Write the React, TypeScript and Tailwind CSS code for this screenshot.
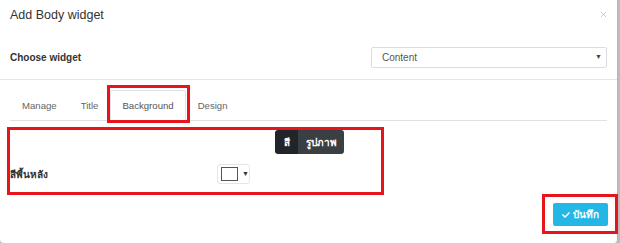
import React from "react";
import { X } from "lucide-react";
import { FaCheck } from "react-icons/fa";

// Tabs of the widget dialog
const tabs = ["Manage", "Title", "Background", "Design"];

const App: React.FC = () => {
  return (
    <div
      className="w-[620px] h-[243px] bg-[#bdbdbd] overflow-hidden"
      style={{ fontFamily: '"Liberation Sans", Arial, sans-serif' }}
    >
      <div className="w-[618px] h-[243px] bg-white border-r border-[#b5b5b5] rounded-b-[4px]">
        {/* Header */}
        <div className="flex justify-between items-start pl-[10px] pr-[9px] pt-[8px]">
          <h4 className="text-[12.5px] leading-[14px] text-[#333]">Add Body widget</h4>
          <X size={9} strokeWidth={2} className="text-[#b8b8b8] mt-[2px]" />
        </div>

        {/* Choose widget */}
        <div className="flex items-center justify-between px-[10px] mt-[25px] pb-[11px] border-b border-[#e5e5e5]">
          <label className="text-[10px] font-bold text-[#333]">Choose widget</label>
          <div className="w-[236px] h-[21px] border border-[#d9dde3] rounded-[2px] flex items-center justify-between pl-[10px] pr-[4px]">
            <span className="text-[10px] text-[#555]">Content</span>
            <span className="text-[7px] text-[#444]">▼</span>
          </div>
        </div>

        {/* Tabs */}
        <ul className="flex mx-[10px] mt-[10px] border-b border-[#dee2e6]">
          {tabs.map((tab) => {
            const active = tab === "Background";
            return (
              <li
                key={tab}
                className={
                  active
                    ? "relative -mb-px px-[11px] py-[8px] text-[9.6px] leading-[13px] text-[#555] bg-white border border-[#dee2e6] border-b-white rounded-t-[2px]"
                    : "relative -mb-px px-[11px] py-[8px] text-[9.6px] leading-[13px] text-[#666] border border-transparent"
                }
              >
                {tab}
                {active && (
                  <span className="absolute left-[-4px] right-[-5px] top-[-6px] bottom-[-3px] border-[3px] border-[#e8141c]" />
                )}
              </li>
            );
          })}
        </ul>

        {/* Background settings */}
        <div className="mt-[6px] ml-[7px] w-[377px] h-[68px] border-[3px] border-[#e8141c] flex flex-col">
          <div className="flex ml-[265px] h-[24px] rounded-[3px] overflow-hidden w-[69px] text-white text-[10px] font-bold">
            <div className="w-[23px] flex items-center justify-center bg-[#212428]">สี</div>
            <div className="flex-1 flex items-center justify-center bg-[#3a3f44]">รูปภาพ</div>
          </div>
          <div className="flex items-center mt-[10px]">
            <span className="w-[207px] text-[10px] font-bold text-[#333]">สีพื้นหลัง</span>
            <div className="w-[33px] h-[20px] border border-[#e3e6ea] rounded-[3px] flex items-center pl-[3px]">
              <div className="w-[17px] h-[14px] bg-white border border-[#555]" />
              <span className="ml-[4px] text-[7px] text-[#333]">▼</span>
            </div>
          </div>
        </div>

        {/* Footer */}
        <div className="flex justify-end -mt-px -mr-px">
          <div className="border-[3px] border-[#e8141c] pl-[8px] pr-[7px] pt-[6px] pb-[5px]">
            <button className="w-[55px] h-[23px] bg-[#23b7e5] rounded-[2px] text-white text-[10px] font-bold flex items-center justify-center gap-[3px]">
              <FaCheck size={8} />
              <span>บันทึก</span>
            </button>
          </div>
        </div>
      </div>
    </div>
  );
};

export default App;
